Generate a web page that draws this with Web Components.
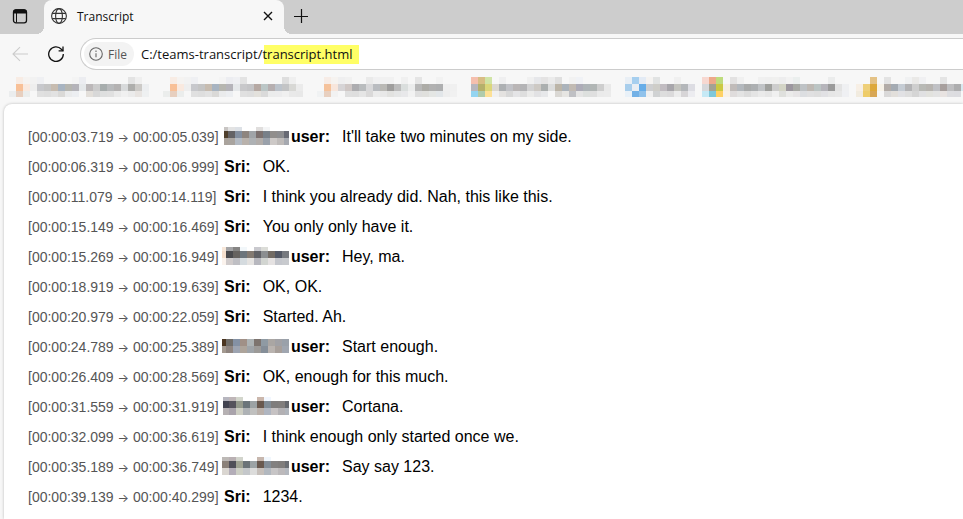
<!DOCTYPE html>
<html lang="en">
<head>
<meta charset="utf-8">
<title>Transcript</title>
<style>
    body {
        margin: 0;
        background: #f7f7f7;
        font-family: "Liberation Sans", Arial, sans-serif;
        overflow: hidden;
    }
</style>
</head>
<body>

<browser-window>
    <tab-strip slot="tabs">
        <browser-tab>Transcript</browser-tab>
    </tab-strip>
    <address-bar slot="toolbar" value="C:/teams-transcript/transcript.html"></address-bar>
    <bookmark-bar slot="bookmarks"></bookmark-bar>

    <transcript-line from="00:00:03.719" to="00:00:05.039" speaker="user" mask="a">It'll take two minutes on my side.</transcript-line>
    <transcript-line from="00:00:06.319" to="00:00:06.999" speaker="Sri">OK.</transcript-line>
    <transcript-line from="00:00:11.079" to="00:00:14.119" speaker="Sri">I think you already did. Nah, this like this.</transcript-line>
    <transcript-line from="00:00:15.149" to="00:00:16.469" speaker="Sri">You only only have it.</transcript-line>
    <transcript-line from="00:00:15.269" to="00:00:16.949" speaker="user" mask="b">Hey, ma.</transcript-line>
    <transcript-line from="00:00:18.919" to="00:00:19.639" speaker="Sri">OK, OK.</transcript-line>
    <transcript-line from="00:00:20.979" to="00:00:22.059" speaker="Sri">Started. Ah.</transcript-line>
    <transcript-line from="00:00:24.789" to="00:00:25.389" speaker="user" mask="c">Start enough.</transcript-line>
    <transcript-line from="00:00:26.409" to="00:00:28.569" speaker="Sri">OK, enough for this much.</transcript-line>
    <transcript-line from="00:00:31.559" to="00:00:31.919" speaker="user" mask="d">Cortana.</transcript-line>
    <transcript-line from="00:00:32.099" to="00:00:36.619" speaker="Sri">I think enough only started once we.</transcript-line>
    <transcript-line from="00:00:35.189" to="00:00:36.749" speaker="user" mask="e">Say say 123.</transcript-line>
    <transcript-line from="00:00:39.139" to="00:00:40.299" speaker="Sri">1234.</transcript-line>
</browser-window>

<script>
function template(markup) {
    const t = document.createElement("template");
    t.innerHTML = markup;
    return t;
}

// Rows of cell colours, "-" is an empty cell
const bookmarks = [
    ["- f8ece4 f5f3f1 f2f2f2 f2f2f2 eff0f3 - - - - f4f4f4 ecedf1 - - - - - - e3e3e3 efefef -",
     "- f8c097 f9e9df eeeeee - c7c8cc c4c4c4 c7bcb0 a8b4c1 b6b6b0 b5b4ba e5e8ea bcb8b9 cccccc a7adad b8babc b4b2b2 d8dadb aeaeac cccac7 eceef0",
     "ebedee e7cfbf ebedec - - e0e0e0 dedede e2e2e2 dad9d7 eaebec eceef1 - e3dfda d8d8d8 dedfdf e0e0e0 eaeaea f0f0f0 ebebeb e8e4e1 eef0f1"],
    ["- f8ece4 f5f3f1 f2f2f2 eff0f3 - - - f4f4f4 ecedf1 eff0f3 e3e3e3 - - - - - dedede efefef - -",
     "- f8c097 f9e9df eeeeee c7c8cc c4c4c4 c7bcb0 a8b4c1 b6b6b0 b5b4ba e5e8ea c8c8ca c4c4c6 b6a9a3 bbc6c6 b6afb0 bcc3cb c3c4c5 d8d8d5 ebebeb -",
     "ebedec e7cfbf ebedec - e0e0e0 dedede e2e2e2 dad9d7 eaebec eceef1 - e0e0e0 dedede e3e1dc dadada ebecec ececed f0f0f0 e9e9e9 e8e8e8 -"],
    ["- f7ece6 f6f3f0 efeff0 f1f1f1 - - eaeaea f0f0f1 f1f1f1 f1f1f1 - f0f0f0 - e5e5e5 - - f2f2f2 - - -",
     "- f5c29b f8e6dc d6d4d6 cfc7c5 adadb0 b9bcbe d8d8da b9bcc0 bab9b5 9f9e9d bcbcbc dadedd ebecec b8b8b8 adaca7 b1b1b1 aeafb0 efefef f0f0f0 -",
     "f0f2f3 e8d0c0 f2f2f2 - dfdfdf dedede e5e5e5 dad9d9 ebebeb e8e8e8 e2e2e0 e5e6e6 e8e8ea f2f2f2 dfdfdf e0e0dd e4e6e4 e2e6e9 eeeeee f1f1f1 -"],
    ["f5bfae d8bd84 d0e4a6 - efeff0 - - - f0f0f0 e6e7ea e4e3e3 ebebeb dfdfdf - f2f2f2 f0f2f6 - - - - -",
     "b7b6bd b5b06b dbd67a dcd8d2 adb0b3 c1c2c7 bab6b6 b4b4b6 d2d2d3 cdc9c4 abafaf dbdcdc bcb5a8 abb3bb c1bab3 adacb8 afb5b8 b1b6b5 cecece e9e9e9 -",
     "94d5f1 b0cbab fde096 f0f0f0 e4e2e0 d8d8d8 e4e4e6 dedede ebebea e2e2e4 e7e8ea - dad8d4 e6e5e2 bfc0c4 e5e5e5 dde0de dfdfdf eaeaea ebebeb -"],
    ["e9eff5 a6cfef e3ebf5 f5f3f1 e1e3e3 - - f0f0f0 - -",
     "a8ceec e8eef4 67ade8 cecfd1 cecdc8 c1bcc1 a8a6ab c4c4bf b4b7ba dddde3",
     "e9f1f8 73b1e6 90c2eb f0f0f0 d0d2d3 dddddd dbdadb ececec d7d5d7 ececf0"],
    ["f7d8d1 eda98a bedc7d - e3e2e2 f0f0f0 - - f0f0f0 efefef f0f0ef ededee f2f2f2 ebefee - - - - ebecec - -",
     "d7d8db a3a293 cbc941 f5eee2 c0bbb9 b3b8bd a9abab adb0b2 c0c3c6 9fa09d cdcdcd d3d4c6 9c979f a9aba6 bec2c5 beb9b4 bcc5c4 b6b5bb 9b9b9b e3e3e3 eff0f2",
     "c6e9f5 7fc8da ffd165 f8f1e7 dfdcdc e3e3e3 dcdcdc e4e4e4 eaeaea e6e6e6 f0f0f0 dfe0dd ebebea e7e5e6 dcdee1 e0e0e1 dedede e1e1e4 e6e6e6 e8e8e8 eff0f3"],
    ["- - e4c286 - e3e3e3 - - f0f1f2 eae9e7 f0f0f2 - - e4e4e4 - - -",
     "f7efe5 eecf78 dda83a f7f2e8 b3aca7 a4abb3 c5ccd4 b3b3b5 cecece b8b9b5 b7b4b0 c0c1c5 a79f9d bebec0 adadae d8e8f0",
     "f1ebdf eecc68 d8a755 - dad9d9 e2dfdb e1e1e4 dedede d5d5d5 e0e0e2 e2e2de e3e3e3 e8e3e1 dddde0 dcdce0 -"]
];

const masks = {
    a: { lead: 4, heights: [4, 7, 7], width: 65, rows: [
        "c8c5c3 e3e3e3 dde1e6 - - e0dedd f4f5f6 - - -",
        "4f3f2c 636265 838fa0 8e857f a0a4a8 7d716f 788089 918e8c 8f8f91 686a74",
        "aaa39c a9a49f b3bac3 b9b2ac aeb1b4 b2adaa 9aa1ab cdc9c7 bfbbb9 a6a9b0"] },
    b: { lead: 4, heights: [4, 7, 7], width: 67, rows: [
        "f8e8da a4a4a6 868584 f2f7fa - c9c9ce dcddd8 - - -",
        "f5dfcd 4a4a4d 66625f 6c757c 837a72 606166 8b8e90 726b64 535865 76797f",
        "fbf3ed d0cbcb bfbfc4 d5dbdf e5e3e1 b7b7be d2d5d1 e5e2e2 c5c7cd c8cace"] },
    c: { lead: 4, heights: [7, 7], width: 67, rows: [
        "4b3520 706d69 8491a4 a09087 adb3b5 7d746f 8f9aa3 aaa6a3 a1a1a5 9aa1aa",
        "a49a91 8f8580 9da4b1 ada49b 9fa4a9 9c9a98 858e98 b9b3af a79f9a a0a6b0"] },
    d: { lead: 6, heights: [4, 7, 7], width: 66, rows: [
        "b7b6bf bfb6b8 d3d6cc - - cbb7ac f2f7ff - - -",
        "424350 55525c 94998c 6b757a 9ca2a4 69584e 808b95 7f7d7d 817e7d 65686e",
        "b6b1b3 a9a3ab cdcec3 aeb2b5 c0c0bf bab0aa b0b6c1 c6c2c3 b3b1b4 b0b5bc"] },
    e: { lead: 7, heights: [4, 7, 7], width: 67, rows: [
        "bdb9b6 b9b0b3 d2d4cc - - c7b7ae f1f7fd - - -",
        "8b8179 504f59 9fa293 6b7378 9ca3a5 69594f 828c96 828080 807d7c 6b6e74",
        "dad6d1 b3adb8 cdcfc5 c4c7ca dcdcdb c6bfba b2b8bf c7c5c6 bcb9bb b4b8bf"] }
};

// the first bookmark has no gap cell between its icon and its text
bookmarks[0] = bookmarks[0].map(row => {
    const cells = row.split(" ");
    cells.splice(4, 1);
    return cells.concat("-").join(" ");
});

class PixelMosaic extends HTMLElement {
    constructor() {
        super();
        this.attachShadow({ mode: "open" });
    }

    draw(rows, heights, lead = 7, width = 0) {
        let y = 0;
        let rects = "";
        const full = width || rows[1].split(" ").length * 7;
        rows.forEach((row, r) => {
            row.split(" ").forEach((color, c) => {
                const x = c ? lead + (c - 1) * 7 : 0;
                if (color !== "-") {
                    rects += `<rect x="${x}" y="${y}" width="${c ? 7 : lead}" height="${heights[r]}" fill="#${color}"/>`;
                }
            });
            y += heights[r];
        });
        this.shadowRoot.innerHTML = `
            <style>
                :host { display: inline-block; flex: none; }
                svg { display: block; }
            </style>
            <svg width="${full}" height="${y}" shape-rendering="crispEdges" aria-hidden="true">${rects}</svg>
        `;
    }
}

const windowHtml = template(`
    <style>
        :host {
            display: block;
            min-height: 100vh;
        }
        main {
            margin-left: 4px;
            padding: 18px 24px 0;
            min-height: calc(100vh - 122px);
            background: white;
            border-radius: 8px 0 0 0;
            box-shadow: 0 0 3px rgba(0, 0, 0, 0.25);
        }
    </style>
    <header>
        <slot name="tabs"></slot>
        <slot name="toolbar"></slot>
        <slot name="bookmarks"></slot>
    </header>
    <main><slot></slot></main>
`);

class BrowserWindow extends HTMLElement {
    constructor() {
        super();
        this.attachShadow({ mode: "open" });
        this.shadowRoot.appendChild(windowHtml.content.cloneNode(true));
    }
}

const stripHtml = template(`
    <style>
        :host {
            display: flex;
            height: 34px;
            background: #cdcdcd;
        }
        button {
            display: flex;
            align-items: center;
            justify-content: center;
            box-sizing: border-box;
            padding: 0;
            border: 0;
            background: none;
        }
        .actions { width: 44px; padding: 0 4px 2px 0; }
        .new { width: 34px; padding-bottom: 3px; }
    </style>
    <button class="actions" aria-label="Tab actions">
        <svg width="16" height="16" viewBox="0 0 16 16" fill="none" stroke="#111">
            <rect x="1.5" y="1.8" width="13" height="13" rx="2.4" stroke-width="1.3"/>
            <path d="M1.5 5V4.2a2.4 2.4 0 0 1 2.4-2.4h8.2a2.4 2.4 0 0 1 2.4 2.4V5z" fill="#111"/>
            <path d="M4.5 5v9.5"/>
        </svg>
    </button>
    <slot></slot>
    <button class="new" aria-label="New tab">
        <svg width="14" height="14" viewBox="0 0 14 14" stroke="#111" stroke-width="1.2">
            <path d="M7.5 0v14M0 7.5h14"/>
        </svg>
    </button>
`);

class TabStrip extends HTMLElement {
    constructor() {
        super();
        this.attachShadow({ mode: "open" });
        this.shadowRoot.appendChild(stripHtml.content.cloneNode(true));
    }
}

const tabHtml = template(`
    <style>
        :host {
            display: flex;
            align-items: center;
            box-sizing: border-box;
            width: 240px;
            padding: 0 8px 2px 7px;
            position: relative;
            background: #f7f7f7;
            border-radius: 8px 8px 0 0;
            font: 12px "Open Sans", "Segoe UI", sans-serif;
            color: #111;
        }
        /* flared feet of the active tab */
        :host::before,
        :host::after {
            content: "";
            position: absolute;
            bottom: 0;
            width: 8px;
            height: 8px;
        }
        :host::before {
            right: 100%;
            background: radial-gradient(circle at 0 0, transparent 8px, #f7f7f7 8px);
        }
        :host::after {
            left: 100%;
            background: radial-gradient(circle at 100% 0, transparent 8px, #f7f7f7 8px);
        }
        .title {
            flex: 1;
            margin-left: 10px;
        }
        button {
            display: flex;
            padding: 3px;
            border: 0;
            background: none;
        }
    </style>
    <svg width="16" height="16" viewBox="0 0 16 16" fill="none" stroke="#333" stroke-width="1.1">
        <circle cx="8" cy="8" r="7.4"/>
        <ellipse cx="8" cy="8" rx="3.4" ry="7.4"/>
        <path d="M1.2 5.4h13.6M1.2 10.6h13.6"/>
    </svg>
    <span class="title"><slot></slot></span>
    <button aria-label="Close tab">
        <svg width="10" height="10" viewBox="0 0 10 10" stroke="#111" stroke-width="1.4">
            <path d="M1 1l8 8M9 1L1 9"/>
        </svg>
    </button>
`);

class BrowserTab extends HTMLElement {
    constructor() {
        super();
        this.attachShadow({ mode: "open" });
        this.shadowRoot.appendChild(tabHtml.content.cloneNode(true));
    }
}

const addressHtml = template(`
    <style>
        :host {
            display: flex;
            align-items: center;
            padding: 4px 0 7px 12px;
            font: 13px "Open Sans", "Segoe UI", sans-serif;
            color: #111;
        }
        button {
            display: flex;
            padding: 0;
            border: 0;
            background: none;
            font: inherit;
            color: inherit;
        }
        .reload { margin: 0 16px 0 20px; }
        .field {
            display: flex;
            align-items: center;
            flex: 1;
            box-sizing: border-box;
            height: 32px;
            padding-left: 3px;
            background: white;
            border: 1px solid #ccc;
            border-right: 0;
            border-radius: 16px 0 0 16px;
        }
        .site {
            align-items: center;
            gap: 5px;
            height: 24px;
            padding: 0 7px 0 5px;
            background: #f3f3f3;
            border-radius: 12px;
            font-size: 12px;
            color: #555;
        }
        input {
            flex: 1;
            min-width: 0;
            height: 19px;
            padding: 0 0 0 7px;
            border: 0;
            outline: 0;
            font: inherit;
            color: inherit;
            background: linear-gradient(#ffff66, #ffff66) no-repeat 130px 0 / 95px 100%;
        }
    </style>
    <button aria-label="Back">
        <svg width="16" height="16" viewBox="0 0 16 16" fill="none" stroke="#ccc" stroke-width="1.1">
            <path d="M16 8H1M8 1.2L1 8l7 6.8"/>
        </svg>
    </button>
    <button class="reload" aria-label="Refresh">
        <svg width="16" height="16" viewBox="0 0 16 16" fill="none" stroke="#111" stroke-width="1.3">
            <path d="M15.3 8A7.3 7.3 0 1 1 13.4 3.2L15 4.8"/>
            <path d="M15 .4v4.4h-4.4"/>
        </svg>
    </button>
    <div class="field">
        <button class="site">
            <svg width="14" height="14" viewBox="0 0 14 14" fill="none" stroke="#666" stroke-width="1.1">
                <circle cx="7" cy="7" r="6.3"/>
                <path d="M7 6.2v4M7 3.6v1.3"/>
            </svg>
            File
        </button>
        <input type="text" aria-label="Address" spellcheck="false">
    </div>
`);

class AddressBar extends HTMLElement {
    constructor() {
        super();
        this.attachShadow({ mode: "open" });
        this.shadowRoot.appendChild(addressHtml.content.cloneNode(true));
        this.shadowRoot.querySelector("input").value = this.getAttribute("value");
    }
}

const bookmarkHtml = template(`
    <style>
        :host {
            display: flex;
            gap: 7px;
            padding: 0 0 7px 9px;
            overflow: hidden;
        }
    </style>
`);

class BookmarkBar extends HTMLElement {
    constructor() {
        super();
        this.attachShadow({ mode: "open" });
        this.shadowRoot.appendChild(bookmarkHtml.content.cloneNode(true));
        bookmarks.forEach(rows => {
            const item = document.createElement("pixel-mosaic");
            item.draw(rows, [7, 7, 6]);
            this.shadowRoot.appendChild(item);
        });
    }
}

const lineHtml = template(`
    <style>
        :host {
            display: flex;
            align-items: baseline;
            height: 30px;
            line-height: 30px;
            font-size: 16px;
            color: black;
        }
        .time {
            flex: none;
            width: 196px;
            font-size: 14px;
            color: #555;
            white-space: nowrap;
        }
        .arrow {
            font-family: Inter, "Liberation Sans", sans-serif;
            font-size: 12px;
            line-height: 1;
        }
        .name {
            display: flex;
            align-items: baseline;
            justify-content: flex-end;
            margin-right: 12px;
            font-weight: bold;
        }
        .masked { width: 106px; }
        .masked pixel-mosaic {
            align-self: center;
            margin: 0 2px 2px 0;
        }
    </style>
    <span class="time">[<span class="from"></span> <span class="arrow">→</span> <span class="to"></span>]</span>
    <span class="name"></span>
    <span><slot></slot></span>
`);

class TranscriptLine extends HTMLElement {
    constructor() {
        super();
        this.attachShadow({ mode: "open" });
        this.shadowRoot.appendChild(lineHtml.content.cloneNode(true));
        this.shadowRoot.querySelector(".from").textContent = this.getAttribute("from");
        this.shadowRoot.querySelector(".to").textContent = this.getAttribute("to");

        const name = this.shadowRoot.querySelector(".name");
        name.textContent = this.getAttribute("speaker") + ":";

        const mask = masks[this.getAttribute("mask")];
        if (mask) {
            const mosaic = document.createElement("pixel-mosaic");
            mosaic.draw(mask.rows, mask.heights, mask.lead, mask.width);
            name.classList.add("masked");
            name.prepend(mosaic);
        }
    }
}

customElements.define("pixel-mosaic", PixelMosaic);
customElements.define("browser-window", BrowserWindow);
customElements.define("tab-strip", TabStrip);
customElements.define("browser-tab", BrowserTab);
customElements.define("address-bar", AddressBar);
customElements.define("bookmark-bar", BookmarkBar);
customElements.define("transcript-line", TranscriptLine);
</script>
</body>
</html>
